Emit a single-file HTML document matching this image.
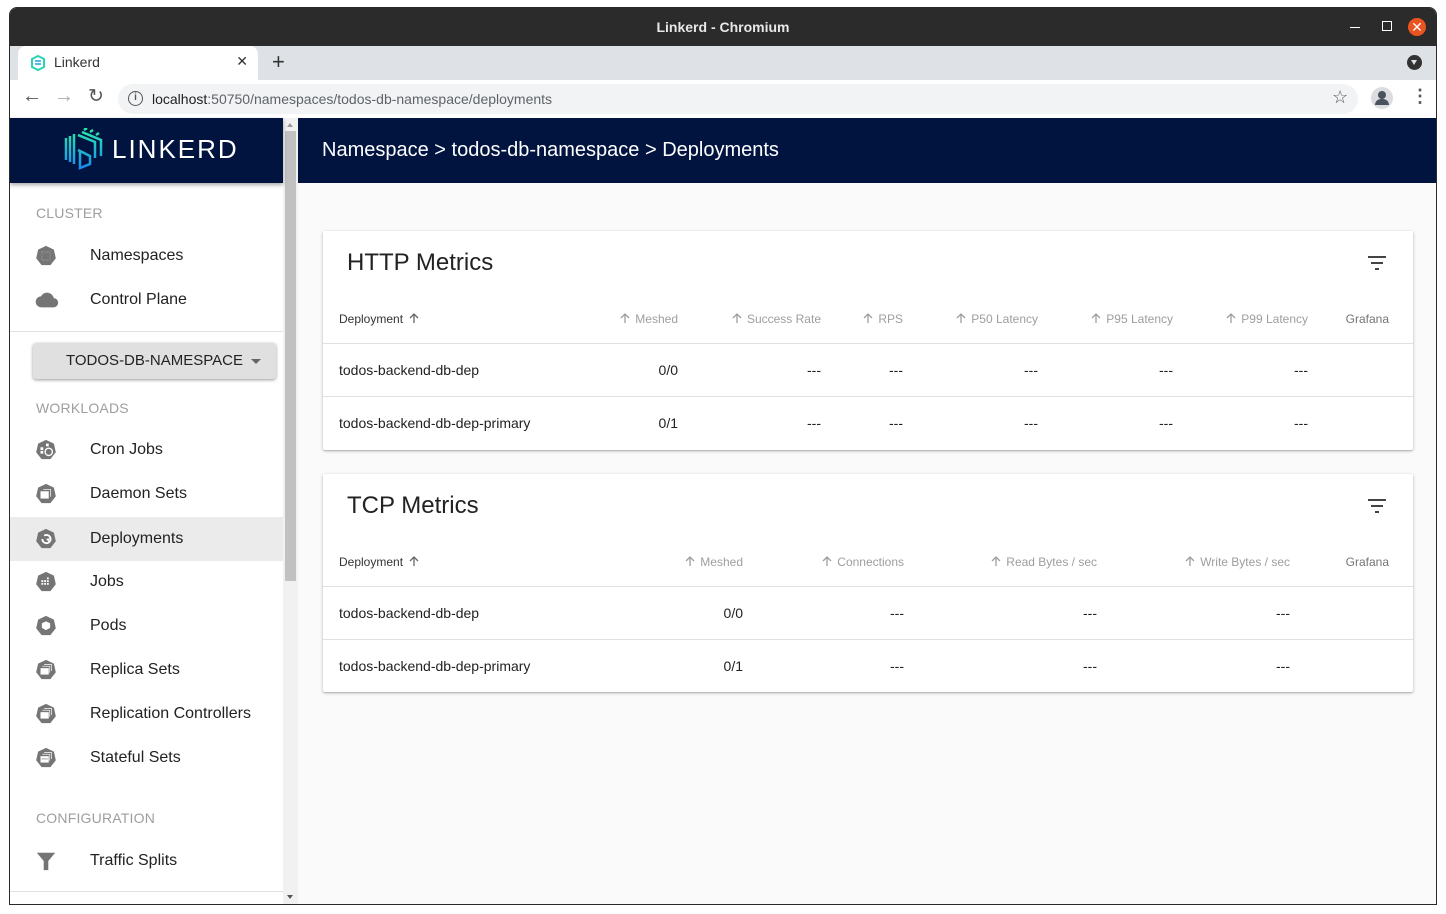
<!DOCTYPE html>
<html><head><meta charset="utf-8"><style>
*{box-sizing:border-box;margin:0;padding:0}
body{width:1446px;height:914px;background:#fff;font-family:"Liberation Sans",sans-serif;position:relative;overflow:hidden}
.abs{position:absolute}
.win{left:9px;top:7px;width:1428px;height:898px;border:1px solid #2b2b2b;border-radius:8px 8px 0 0;overflow:hidden;background:#fafafa}
.title{left:0;top:0;width:100%;height:38px;background:#2b2b2b;color:#e8e8e8;font-weight:bold;font-size:14px;text-align:center;line-height:38px}
.tabs{left:0;top:38px;width:100%;height:34px;background:#dee1e6}
.tab{left:8px;top:0;width:240px;height:34px;background:#fff;border-radius:8px 8px 0 0}
.tool{left:0;top:72px;width:100%;height:38px;background:#fff}
.url{left:108px;top:4px;width:1240px;height:30px;border-radius:15px;background:#f1f3f4;font-size:14px;line-height:30px;color:#202124}
.sidehead{left:0;top:110px;width:273px;height:65px;background:#011440;box-shadow:0 2px 4px rgba(0,0,0,.35)}
.mainhead{left:288px;top:110px;width:1140px;height:65px;background:#011440;color:#fff;font-size:20px;line-height:65px;padding-left:24px}
.side{left:0;top:175px;width:273px;height:723px;background:#fff}
.sb{left:273px;top:110px;width:15px;height:788px;background:#f1f1f1}
.sec{position:absolute;left:26px;font-size:14px;color:#9e9e9e;letter-spacing:.2px}
.item{position:absolute;left:0;width:273px;height:44px;font-size:16px;color:#222;line-height:44px}
.item span{position:absolute;left:80px}
.item svg{position:absolute;left:25px;top:11px}
.card{position:absolute;left:313px;width:1090px;background:#fff;box-shadow:0 1px 3px rgba(0,0,0,.25),0 1px 1px rgba(0,0,0,.12);border-radius:2px}
.card h2{position:absolute;left:24px;top:18px;font-weight:normal;font-size:24px;color:#222}
.th{position:absolute;font-size:12px;color:#9e9e9e;white-space:nowrap}
.th svg{vertical-align:-1px;margin-right:4px}
.td{position:absolute;font-size:14px;color:#222;white-space:nowrap}
.hr{position:absolute;left:0;width:100%;height:1px;background:#e0e0e0}
.r{text-align:right}
</style></head><body>
<svg width="0" height="0" style="position:absolute"><defs><symbol id="ar" viewBox="0 0 12 12"><path d="M6 11V2M2 6l4-4 4 4" fill="none" stroke="currentColor" stroke-width="1.3"/></symbol></defs></svg>
<div class="abs win">
 <div class="abs title">Linkerd - Chromium
  <div class="abs" style="right:76px;top:19px;width:10px;height:1px;background:#fff"></div>
  <div class="abs" style="right:44px;top:13px;width:10px;height:10px;border:1px solid #fff"></div>
  <div class="abs" style="right:10px;top:10px;width:18px;height:18px;border-radius:50%;background:#e95420;color:#fff;font-size:14px;line-height:18px;font-weight:normal">✕</div>
 </div>
 <div class="abs tabs">
  <div class="abs tab">
   <svg class="abs" style="left:12px;top:9px" width="16" height="16" viewBox="0 0 16 16"><path d="M2 4 L8 1 L14 4 L14 12 L8 15 L2 12Z" fill="none" stroke="#2bd3b0" stroke-width="2"/><path d="M5 6 L11 6 M5 9 L11 9" stroke="#1fa0d8" stroke-width="1.5"/></svg>
   <span class="abs" style="left:36px;top:8px;font-size:14px;color:#333">Linkerd</span>
   <span class="abs" style="right:10px;top:7px;font-size:14px;color:#333">✕</span>
  </div>
  <span class="abs" style="left:262px;top:3px;font-size:22px;color:#333">+</span>
  <div class="abs" style="right:14px;top:9px;width:15px;height:15px;border-radius:50%;background:#333"><div class="abs" style="left:4px;top:5px;border-left:3.5px solid transparent;border-right:3.5px solid transparent;border-top:5px solid #dee1e6"></div></div>
 </div>
 <div class="abs tool">
  <span class="abs" style="left:12px;top:5px;font-size:20px;color:#555">←</span>
  <span class="abs" style="left:44px;top:5px;font-size:20px;color:#aaa">→</span>
  <span class="abs" style="left:78px;top:5px;font-size:19px;color:#555">↻</span>
  <div class="abs url"><span class="abs" style="left:10px;top:7px;width:15px;height:15px;border:1.5px solid #555;border-radius:50%;font-size:10px;line-height:12px;text-align:center;color:#555;font-weight:bold">i</span><span style="padding-left:34px">localhost<span style="color:#5f6368">:50750/namespaces/todos-db-namespace/deployments</span></span></div>
  <span class="abs" style="left:1322px;top:7px;font-size:18px;color:#555">☆</span>
  <div class="abs" style="left:1361px;top:7px;width:22px;height:22px;border-radius:50%;background:#dadce0"><div class="abs" style="left:7px;top:4px;width:8px;height:8px;border-radius:50%;background:#4a5260"></div><div class="abs" style="left:4px;top:12px;width:14px;height:6px;border-radius:7px 7px 0 0;background:#4a5260"></div></div>
  <span class="abs" style="left:1401px;top:6px;font-size:18px;color:#555;font-weight:bold">⋮</span>
 </div>
 <div class="abs side">
  <div class="sec" style="top:22px">CLUSTER</div>
  <div class="item" style="top:51px"><svg width="22" height="22" viewBox="0 0 24 24"><polygon points="12,1 20.6,5.1 22.7,14.5 16.8,21.9 7.2,21.9 1.3,14.5 3.4,5.1" fill="#757575"/><rect x="7.5" y="7.5" width="9" height="9" fill="none" stroke="#999" stroke-width="1" stroke-dasharray="1.5 1"/></svg><span>Namespaces</span></div>
  <div class="item" style="top:95px"><svg width="24" height="22" viewBox="0 0 24 24"><path d="M19.4 10A7.5 7.5 0 0 0 5.4 8 6 6 0 0 0 6 20h13a5 5 0 0 0 .4-10z" fill="#757575"/></svg><span>Control Plane</span></div>
  <div class="abs" style="left:0;top:148px;width:273px;height:1px;background:#e0e0e0"></div>
  <div class="abs" style="left:23px;top:160px;width:243px;height:36px;background:#e0e0e0;border-radius:3px;box-shadow:0 1px 3px rgba(0,0,0,.4);font-size:15px;color:#222;line-height:36px;padding-left:33px">TODOS-DB-NAMESPACE<span class="abs" style="right:15px;top:16px;border-left:5px solid transparent;border-right:5px solid transparent;border-top:5px solid #666"></span></div>
  <div class="sec" style="top:217px">WORKLOADS</div>
  <div class="item" style="top:245px"><svg width="22" height="22" viewBox="0 0 24 24"><polygon points="12,1 20.6,5.1 22.7,14.5 16.8,21.9 7.2,21.9 1.3,14.5 3.4,5.1" fill="#757575"/><rect x="6" y="9" width="3" height="3" fill="#fff"/><rect x="6" y="13" width="3" height="3" fill="#fff"/><rect x="12" y="5" width="3" height="3" fill="#fff"/><circle cx="15" cy="14" r="4" fill="none" stroke="#fff" stroke-width="1.5"/></svg><span>Cron Jobs</span></div>
  <div class="item" style="top:289px"><svg width="22" height="22" viewBox="0 0 24 24"><polygon points="12,1 20.6,5.1 22.7,14.5 16.8,21.9 7.2,21.9 1.3,14.5 3.4,5.1" fill="#757575"/><rect x="6" y="9" width="9" height="8" fill="#fff"/><path d="M9 7h8v8" fill="none" stroke="#ddd" stroke-width="1"/></svg><span>Daemon Sets</span></div>
  <div class="abs" style="left:0;top:334px;width:273px;height:44px;background:#ebebeb"></div>
  <div class="item" style="top:334px"><svg width="22" height="22" viewBox="0 0 24 24"><polygon points="12,1 20.6,5.1 22.7,14.5 16.8,21.9 7.2,21.9 1.3,14.5 3.4,5.1" fill="#757575"/><path d="M8 12a4.5 4.5 0 1 0 2-3.7" fill="none" stroke="#fff" stroke-width="2"/><path d="M12 12l4-1-1 4z" fill="#fff"/></svg><span>Deployments</span></div>
  <div class="item" style="top:377px"><svg width="22" height="22" viewBox="0 0 24 24"><polygon points="12,1 20.6,5.1 22.7,14.5 16.8,21.9 7.2,21.9 1.3,14.5 3.4,5.1" fill="#757575"/><g fill="#fff"><rect x="7" y="10" width="2" height="2"/><rect x="10" y="10" width="2" height="2"/><rect x="13" y="10" width="2" height="2"/><rect x="7" y="13" width="2" height="2"/><rect x="10" y="13" width="2" height="2"/><rect x="13" y="13" width="2" height="2"/><rect x="13" y="7" width="2" height="2"/></g></svg><span>Jobs</span></div>
  <div class="item" style="top:421px"><svg width="22" height="22" viewBox="0 0 24 24"><polygon points="12,1 20.6,5.1 22.7,14.5 16.8,21.9 7.2,21.9 1.3,14.5 3.4,5.1" fill="#757575"/><path d="M7.5 9 12 7l4.5 2v5L12 16.5 7.5 14z" fill="#fff"/></svg><span>Pods</span></div>
  <div class="item" style="top:465px"><svg width="22" height="22" viewBox="0 0 24 24"><polygon points="12,1 20.6,5.1 22.7,14.5 16.8,21.9 7.2,21.9 1.3,14.5 3.4,5.1" fill="#757575"/><rect x="6" y="10" width="9" height="7" fill="#fff"/><path d="M8 8h8v7M10 6h8v7" fill="none" stroke="#ddd" stroke-width="1"/></svg><span>Replica Sets</span></div>
  <div class="item" style="top:509px"><svg width="22" height="22" viewBox="0 0 24 24"><polygon points="12,1 20.6,5.1 22.7,14.5 16.8,21.9 7.2,21.9 1.3,14.5 3.4,5.1" fill="#757575"/><rect x="6" y="10" width="9" height="7" fill="#fff"/><path d="M8 8h8v7M10 6h8v7" fill="none" stroke="#ddd" stroke-width="1"/></svg><span>Replication Controllers</span></div>
  <div class="item" style="top:553px"><svg width="22" height="22" viewBox="0 0 24 24"><polygon points="12,1 20.6,5.1 22.7,14.5 16.8,21.9 7.2,21.9 1.3,14.5 3.4,5.1" fill="#757575"/><rect x="6" y="10" width="9" height="7" fill="#fff"/><path d="M7 13h7" stroke="#999"/><path d="M8 8h8v7M10 6h8v7" fill="none" stroke="#ddd" stroke-width="1"/></svg><span>Stateful Sets</span></div>
  <div class="sec" style="top:627px">CONFIGURATION</div>
  <div class="item" style="top:656px"><svg width="22" height="22" viewBox="0 0 24 24"><path d="M2 3h20l-7.5 9v10h-5V12z" fill="#757575"/></svg><span>Traffic Splits</span></div>
  <div class="abs" style="left:0;top:708px;width:273px;height:1px;background:#e0e0e0"></div>
 </div>
 <div class="abs sb"><div class="abs" style="left:2px;top:13px;width:11px;height:450px;background:#c1c1c1"></div>
  <div class="abs" style="left:4px;top:5px;border-left:3.5px solid transparent;border-right:3.5px solid transparent;border-bottom:4px solid #999"></div>
  <div class="abs" style="left:4px;top:777px;border-left:3.5px solid transparent;border-right:3.5px solid transparent;border-top:4px solid #555"></div></div>
 <div class="abs sidehead">
  <svg class="abs" style="left:53px;top:10px" width="42" height="42" viewBox="0 0 42 42"><defs><linearGradient id="g" x1="0" y1="0" x2="0" y2="1"><stop offset="0" stop-color="#2beda7"/><stop offset="1" stop-color="#1a8cf0"/></linearGradient></defs><g fill="none" stroke="url(#g)" stroke-width="2.5"><path d="M3 10 L3 32 M7 8 L7 34 M11 6 L11 36 M15 7 L32 14 L32 30 M19 4 L38 12 L38 28 M15 22 L27 28 L27 36 L17 40 L17 22 M21 2 L24 0 M27 4 L30 2 M33 7 L36 5"/></g></svg>
  <span class="abs" style="left:102px;top:16px;color:#fff;font-size:26px;letter-spacing:2px">LINKERD</span>
 </div>
 <div class="abs mainhead">Namespace &gt; todos-db-namespace &gt; Deployments</div>

 <div class="card" style="top:223px;height:219px">
  <h2>HTTP Metrics</h2>
  <svg class="abs" style="left:1045px;top:25px" width="18" height="14" viewBox="0 0 18 14"><path d="M0 1h18M3 7h12M7 13h4" stroke="#444" stroke-width="2"/></svg>
  <div class="th" style="left:16px;top:81px;color:#333">Deployment <svg width="12" height="12" style="color:#666;margin-left:2px"><use href="#ar"/></svg></div>
  <div class="th r" style="right:735px;top:81px"><svg width="12" height="12"><use href="#ar"/></svg>Meshed</div>
  <div class="th r" style="right:592px;top:81px"><svg width="12" height="12"><use href="#ar"/></svg>Success Rate</div>
  <div class="th r" style="right:510px;top:81px"><svg width="12" height="12"><use href="#ar"/></svg>RPS</div>
  <div class="th r" style="right:375px;top:81px"><svg width="12" height="12"><use href="#ar"/></svg>P50 Latency</div>
  <div class="th r" style="right:240px;top:81px"><svg width="12" height="12"><use href="#ar"/></svg>P95 Latency</div>
  <div class="th r" style="right:105px;top:81px"><svg width="12" height="12"><use href="#ar"/></svg>P99 Latency</div>
  <div class="th r" style="right:24px;top:81px;color:#757575">Grafana</div>
  <div class="hr" style="top:112px"></div>
  <div class="td" style="left:16px;top:131px">todos-backend-db-dep</div>
  <div class="td r" style="right:735px;top:131px">0/0</div>
  <div class="td r" style="right:592px;top:131px">---</div><div class="td r" style="right:510px;top:131px">---</div><div class="td r" style="right:375px;top:131px">---</div><div class="td r" style="right:240px;top:131px">---</div><div class="td r" style="right:105px;top:131px">---</div>
  <div class="hr" style="top:165px"></div>
  <div class="td" style="left:16px;top:184px">todos-backend-db-dep-primary</div>
  <div class="td r" style="right:735px;top:184px">0/1</div>
  <div class="td r" style="right:592px;top:184px">---</div><div class="td r" style="right:510px;top:184px">---</div><div class="td r" style="right:375px;top:184px">---</div><div class="td r" style="right:240px;top:184px">---</div><div class="td r" style="right:105px;top:184px">---</div>
 </div>

 <div class="card" style="top:466px;height:218px">
  <h2>TCP Metrics</h2>
  <svg class="abs" style="left:1045px;top:25px" width="18" height="14" viewBox="0 0 18 14"><path d="M0 1h18M3 7h12M7 13h4" stroke="#444" stroke-width="2"/></svg>
  <div class="th" style="left:16px;top:81px;color:#333">Deployment <svg width="12" height="12" style="color:#666;margin-left:2px"><use href="#ar"/></svg></div>
  <div class="th r" style="right:670px;top:81px"><svg width="12" height="12"><use href="#ar"/></svg>Meshed</div>
  <div class="th r" style="right:509px;top:81px"><svg width="12" height="12"><use href="#ar"/></svg>Connections</div>
  <div class="th r" style="right:316px;top:81px"><svg width="12" height="12"><use href="#ar"/></svg>Read Bytes / sec</div>
  <div class="th r" style="right:123px;top:81px"><svg width="12" height="12"><use href="#ar"/></svg>Write Bytes / sec</div>
  <div class="th r" style="right:24px;top:81px;color:#757575">Grafana</div>
  <div class="hr" style="top:112px"></div>
  <div class="td" style="left:16px;top:131px">todos-backend-db-dep</div>
  <div class="td r" style="right:670px;top:131px">0/0</div>
  <div class="td r" style="right:509px;top:131px">---</div><div class="td r" style="right:316px;top:131px">---</div><div class="td r" style="right:123px;top:131px">---</div>
  <div class="hr" style="top:165px"></div>
  <div class="td" style="left:16px;top:184px">todos-backend-db-dep-primary</div>
  <div class="td r" style="right:670px;top:184px">0/1</div>
  <div class="td r" style="right:509px;top:184px">---</div><div class="td r" style="right:316px;top:184px">---</div><div class="td r" style="right:123px;top:184px">---</div>
 </div>
</div>
</body></html>
